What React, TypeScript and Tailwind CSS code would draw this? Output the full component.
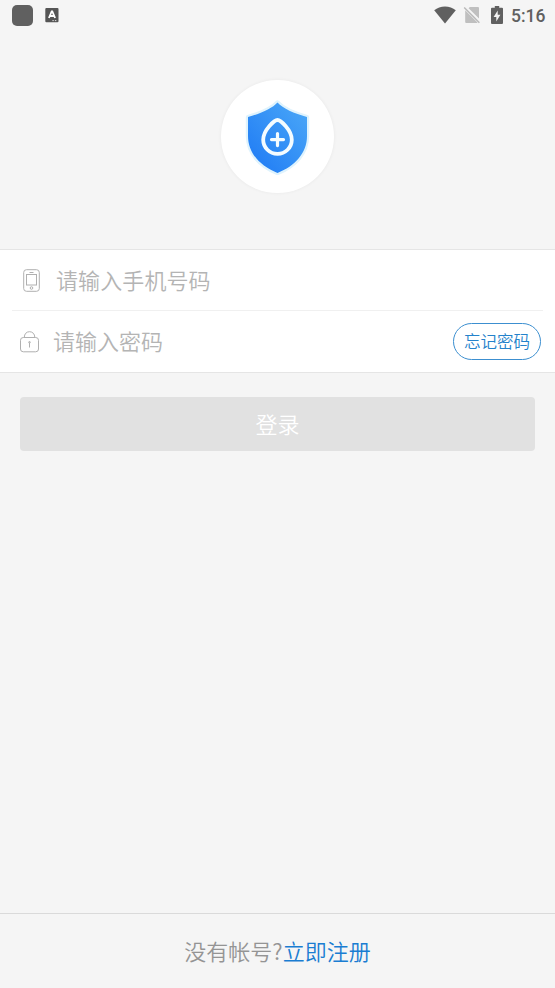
function StatusBar() {
  return (
    <header className="flex h-[30px] shrink-0 items-center justify-between pl-[12px] pr-[10px] text-[#606060]">
      <div className="flex items-center gap-[12px]">
        <div className="size-[21px] rounded-[5px] bg-[#606060]" />
        <svg width="14" height="15" viewBox="0 0 14 15">
          <rect x="0.300" y="0" width="13.200" height="14.200" rx="1" fill="#555" />
          <path d="M3.900 10 6.700 3.300h.6L10.100 10M4.900 8h4.200" fill="none" stroke="#fff" strokeWidth="1.800" />
          <path d="M7.400 12.600h1.400M9.900 12.600h1.400" stroke="#ddd" strokeWidth="1" />
        </svg>
      </div>
      <div className="flex items-center">
        <svg width="22" height="18" viewBox="0 0 22 18">
          <path d="M11 17.600.2 4.200C3.200 1.700 6.900.4 11 .4s7.800 1.300 10.800 3.800Z" fill="currentColor" />
        </svg>
        <svg className="ml-[7px]" width="18" height="18" viewBox="0 0 18 18">
          <path d="M6.800 1H15a1 1 0 0 1 1 1V12.600L5.600 2.200ZM2.200 4.200 14.500 16.500 14 17H3.200a1 1 0 0 1-1-1Z" fill="#bfbfbf" />
          <path d="M1.200 1.600 16.400 16.800" stroke="#b8b8b8" strokeWidth="1.400" />
        </svg>
        <svg className="ml-[10px]" width="12" height="18" viewBox="0 0 12 18">
          <path d="M3.800 0h4.400v1.800H11a1 1 0 0 1 1 1V17a1 1 0 0 1-1 1H1a1 1 0 0 1-1-1V2.800a1 1 0 0 1 1-1h2.800Z" fill="currentColor" />
          <path d="M6.700 4.500 2.600 10.900h2.700v4.600l4.100-6.700H6.700Z" fill="#f5f5f5" />
        </svg>
        <span className="ml-[8px] w-[34px] whitespace-nowrap pt-px font-[Roboto,sans-serif] text-[17.500px] font-medium leading-[20px]">5:16</span>
      </div>
    </header>
  )
}

function Logo() {
  return (
    <div className="flex size-[113px] items-center justify-center rounded-full bg-white shadow-[0_0_3px_1px_rgba(0,0,0,0.035)]">
      <svg width="66" height="76" viewBox="0 0 66 76">
        <defs>
          <linearGradient id="shield" x1="0.9" y1="0.1" x2="0.2" y2="0.8">
            <stop offset="0" stopColor="#47a4f7" />
            <stop offset="1" stopColor="#2682f5" />
          </linearGradient>
        </defs>
        <path
          d="M33.500 3.500C39 9.500 50 14.500 63 18V37C63 54 51 67 33.500 74 16 67 4 54 4 37V18C17 14.500 28 9.500 33.500 3.500Z"
          fill="url(#shield)"
          stroke="#dff3fd"
          strokeWidth="4.400"
          strokeLinejoin="round"
          paintOrder="stroke"
        />
        <path
          d="M33.500 21C36.500 21 47.800 31 47.800 40.800A14.300 14.100 0 0 1 19.200 40.800C19.200 31 30.500 21 33.500 21Z"
          fill="none"
          stroke="#f4fcff"
          strokeWidth="3.800"
        />
        <path d="M33.500 34.600v12M27.500 40.600h12" stroke="#f4fcff" strokeWidth="3.200" strokeLinecap="round" />
      </svg>
    </div>
  )
}

function PhoneIcon() {
  return (
    <svg width="17" height="23" viewBox="0 0 17 23" fill="none" stroke="#b0b0b0" strokeWidth="1">
      <rect x="0.700" y="0.700" width="15.600" height="21.600" rx="2.800" />
      <rect x="3.500" y="5.500" width="10" height="10.500" />
      <path d="M6.500 3.500h4" />
      <circle cx="8.500" cy="19" r="1.300" />
    </svg>
  )
}

function LockIcon() {
  return (
    <svg width="20" height="22" viewBox="0 0 20 22" fill="none" stroke="#b0b0b0" strokeWidth="1">
      <rect x="0.500" y="6.500" width="18" height="14.300" rx="2.800" />
      <path d="M4.300 6.500C4.300 2.900 6.400 0.700 9.500 0.700s5.300 2.200 5.300 5.800" />
      <path d="M9.500 11.500v5" />
      <circle cx="9.500" cy="11.300" r="0.800" />
    </svg>
  )
}

export default function App() {
  return (
    <div className="flex h-[988px] w-[555px] flex-col overflow-hidden bg-[#f5f5f5] font-['Noto_Sans_CJK_SC',sans-serif] text-[22px] font-[350] leading-[30px]">
      <StatusBar />
      <div className="flex h-[219px] shrink-0 justify-center pr-px pt-[50px]">
        <Logo />
      </div>

      <form className="h-[124px] shrink-0 border-y border-[#e5e5e5] bg-white text-[#b4b4b4]">
        <div className="mx-[12px] flex h-[61px] items-center border-b border-[#f0f0f0] pl-[11px]">
          <PhoneIcon />
          <span className="ml-[16px] pb-[3px] tracking-[0.100px]">请输入手机号码</span>
        </div>
        <div className="flex h-[61px] items-center pl-[20px] pr-[14px]">
          <LockIcon />
          <span className="ml-[13px] pb-[3px]">请输入密码</span>
          <button type="button" className="ml-auto h-[37px] w-[88px] whitespace-nowrap rounded-full border border-[#3c8fd0] pb-[2px] text-[16.500px] leading-[32px] text-[#2482cb]">
            忘记密码
          </button>
        </div>
      </form>

      <button type="button" className="mx-[20px] mt-[24px] h-[54px] shrink-0 rounded-[4px] bg-[#e1e1e1] pb-[3px] text-white">
        登录
      </button>

      <footer className="mt-auto flex h-[75px] items-center justify-center border-t border-[#dadada] pb-[3px] text-[#949494]">
        <span>没有帐号?</span>
        <a className="text-[#1a7dd2]">立即注册</a>
      </footer>
    </div>
  )
}
